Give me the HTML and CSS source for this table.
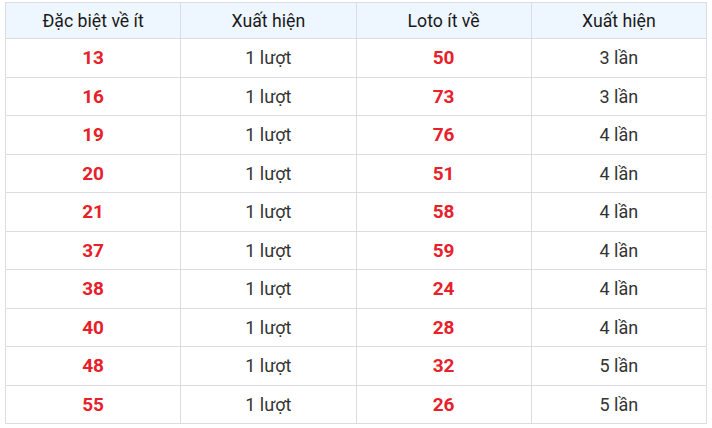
FILE: index.html
```html
<!DOCTYPE html>
<html>
<head>
<meta charset="utf-8">
<link rel="stylesheet" href="styles.css">
</head>
<body>
<table class="stats">
  <thead>
    <tr><th>Đặc biệt về ít</th><th>Xuất hiện</th><th>Loto ít về</th><th>Xuất hiện</th></tr>
  </thead>
  <tbody>
    <tr><td class="num">13</td><td>1 lượt</td><td class="num">50</td><td>3 lần</td></tr>
    <tr><td class="num">16</td><td>1 lượt</td><td class="num">73</td><td>3 lần</td></tr>
    <tr><td class="num">19</td><td>1 lượt</td><td class="num">76</td><td>4 lần</td></tr>
    <tr><td class="num">20</td><td>1 lượt</td><td class="num">51</td><td>4 lần</td></tr>
    <tr><td class="num">21</td><td>1 lượt</td><td class="num">58</td><td>4 lần</td></tr>
    <tr><td class="num">37</td><td>1 lượt</td><td class="num">59</td><td>4 lần</td></tr>
    <tr><td class="num">38</td><td>1 lượt</td><td class="num">24</td><td>4 lần</td></tr>
    <tr><td class="num">40</td><td>1 lượt</td><td class="num">28</td><td>4 lần</td></tr>
    <tr><td class="num">48</td><td>1 lượt</td><td class="num">32</td><td>5 lần</td></tr>
    <tr><td class="num">55</td><td>1 lượt</td><td class="num">26</td><td>5 lần</td></tr>
  </tbody>
</table>
</body>
</html>
```
FILE: styles.css
```css
html, body {
  margin: 0;
  padding: 0;
  background: #fff;
}
body {
  padding: 2px 5px 0 5px;
  font-family: Roboto, "Liberation Sans", sans-serif;
}
.stats {
  width: 702px;
  border-collapse: collapse;
  table-layout: fixed;
}
.stats th, .stats td {
  border: 1px solid #dcdde3;
  text-align: center;
  padding: 0;
}
.stats th {
  height: 35px;
  background: #eef6ff;
  font-weight: 400;
  font-size: 17.7px;
  color: #1a1a1a;
}
.stats td {
  height: 37.5px;
  font-size: 18px;
  color: #333;
}
.stats td.num {
  color: #e8202a;
  font-weight: 700;
  font-size: 19px;
}
```
